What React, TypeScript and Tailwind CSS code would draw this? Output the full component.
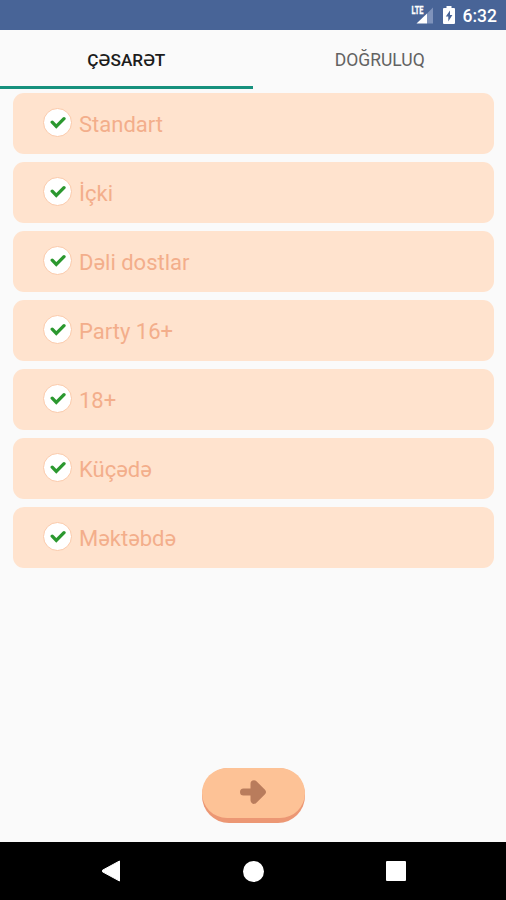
import { useState } from "react";

interface Category {
  id: number;
  name: string;
}

interface CategoryRowProps {
  category: Category;
  checked: boolean;
  toggleHandler: () => void;
}

const tabs = ["ÇƏSARƏT", "DOĞRULUQ"];

const categories: Category[] = [
  { id: 1, name: "Standart" },
  { id: 2, name: "İçki" },
  { id: 3, name: "Dəli dostlar" },
  { id: 4, name: "Party 16+" },
  { id: 5, name: "18+" },
  { id: 6, name: "Küçədə" },
  { id: 7, name: "Məktəbdə" },
];

const StatusBar = () => {
  return (
    <div className="flex h-[30px] shrink-0 items-center justify-end bg-[#486497] pr-[9px] text-white">
      <svg className="mr-[9px]" width="23" height="20" viewBox="0 0 23 20">
        <path d="M22 2.500v16h-6v-10z" fill="#7f93bb" />
        <path d="M16 8.500v10H5.500z" fill="#fff" />
        <text
          x="0.5"
          y="9"
          fontSize="10.5"
          fontWeight="700"
          fill="#fff"
          stroke="#fff"
          strokeWidth="0.3"
          textLength="12"
          lengthAdjust="spacingAndGlyphs"
        >
          LTE
        </text>
      </svg>
      <svg className="mr-[8px]" width="12" height="18" viewBox="0 0 12 18">
        <path
          d="M3.5 0h5v2H11a1 1 0 0 1 1 1v14a1 1 0 0 1-1 1H1a1 1 0 0 1-1-1V3a1 1 0 0 1 1-1h2.500z"
          fill="#fff"
        />
        <path d="M7 4.500 2.800 10.500h2.500V15.500L9.400 9H7z" fill="#486497" />
      </svg>
      <span className="pt-[3px] text-[17.5px] leading-none font-medium">6:32</span>
    </div>
  );
};

const CategoryRow: React.FC<CategoryRowProps> = ({
  category,
  checked,
  toggleHandler,
}) => {
  return (
    <button
      type="button"
      onClick={toggleHandler}
      className="flex h-[61px] w-full items-center rounded-[11px] bg-[#ffe3ce] pl-[30px] text-left"
    >
      <span className="mb-px flex size-[29px] items-center justify-center rounded-full border border-[#fbc9a9] bg-white">
        {checked && (
          <svg width="17" height="14" viewBox="0 0 17 14" className="ml-[2px]">
            <path
              d="M2.200 6.200 6.300 10.500 14 2.700"
              fill="none"
              stroke="#2b982f"
              strokeWidth="3.300"
              strokeLinecap="round"
            />
          </svg>
        )}
      </span>
      <span className="ml-[7.5px] pt-[2px] text-[22px] text-[#f3ae8b]">
        {category.name}
      </span>
    </button>
  );
};

const App = () => {
  const [activeTab, setActiveTab] = useState<number>(0);
  const [unchecked, setUnchecked] = useState<number[]>([]);

  const toggleCategory = (id: number) => {
    setUnchecked((prev) =>
      prev.includes(id) ? prev.filter((item) => item !== id) : [...prev, id]
    );
  };

  return (
    <div className="flex h-[900px] w-[506px] flex-col overflow-hidden bg-[#fafafa] font-['Roboto','Noto_Sans',sans-serif]">
      <StatusBar />

      {/* Tabs */}
      <div className="flex h-[59px] shrink-0">
        {tabs.map((tab, index) => (
          <button
            key={tab}
            type="button"
            onClick={() => setActiveTab(index)}
            className={`flex-1 border-b-[3px] pt-[5px] ${
              activeTab === index
                ? "border-[#16917d] text-[17.2px] font-medium text-[#1c1c1c]"
                : "border-transparent pl-px text-[17.5px] font-[450] text-[#626262]"
            }`}
          >
            {tab}
          </button>
        ))}
      </div>

      {/* Categories */}
      <div className="flex flex-1 flex-col gap-2 pt-[3.5px] pr-3 pl-[12.5px]">
        {categories.map((category) => (
          <CategoryRow
            key={category.id}
            category={category}
            checked={!unchecked.includes(category.id)}
            toggleHandler={() => toggleCategory(category.id)}
          />
        ))}
      </div>

      {/* Next button */}
      <div className="flex shrink-0 justify-center pb-[19px] pl-px">
        <button
          type="button"
          aria-label="Next"
          className="flex h-[55px] w-[103px] flex-col rounded-[27px] bg-[#ec9774]"
        >
          <span className="flex h-[50px] w-full items-center justify-center rounded-[25px] bg-[#fdc296]">
            <svg width="28" height="26" viewBox="0 0 28 26" className="mr-px mb-[2px]">
              <path
                d="M4.500 13H15M15 4.800 23.300 13 15 21.200V4.800Z"
                fill="#b97c5c"
                stroke="#b97c5c"
                strokeWidth="7"
                strokeLinecap="round"
                strokeLinejoin="round"
              />
            </svg>
          </span>
        </button>
      </div>

      {/* Navigation bar */}
      <div className="flex h-[58px] shrink-0 items-center justify-between bg-black pr-[100px] pl-[101px]">
        <svg width="20" height="22" viewBox="0 0 20 22">
          <path d="M18.500 1v20L1.500 11.800v-1.600z" fill="#fff" stroke="#fff" strokeLinejoin="round" />
        </svg>
        <span className="size-[21px] rounded-full bg-white" />
        <span className="size-5 rounded-[1px] bg-white" />
      </div>
    </div>
  );
};

export default App;
